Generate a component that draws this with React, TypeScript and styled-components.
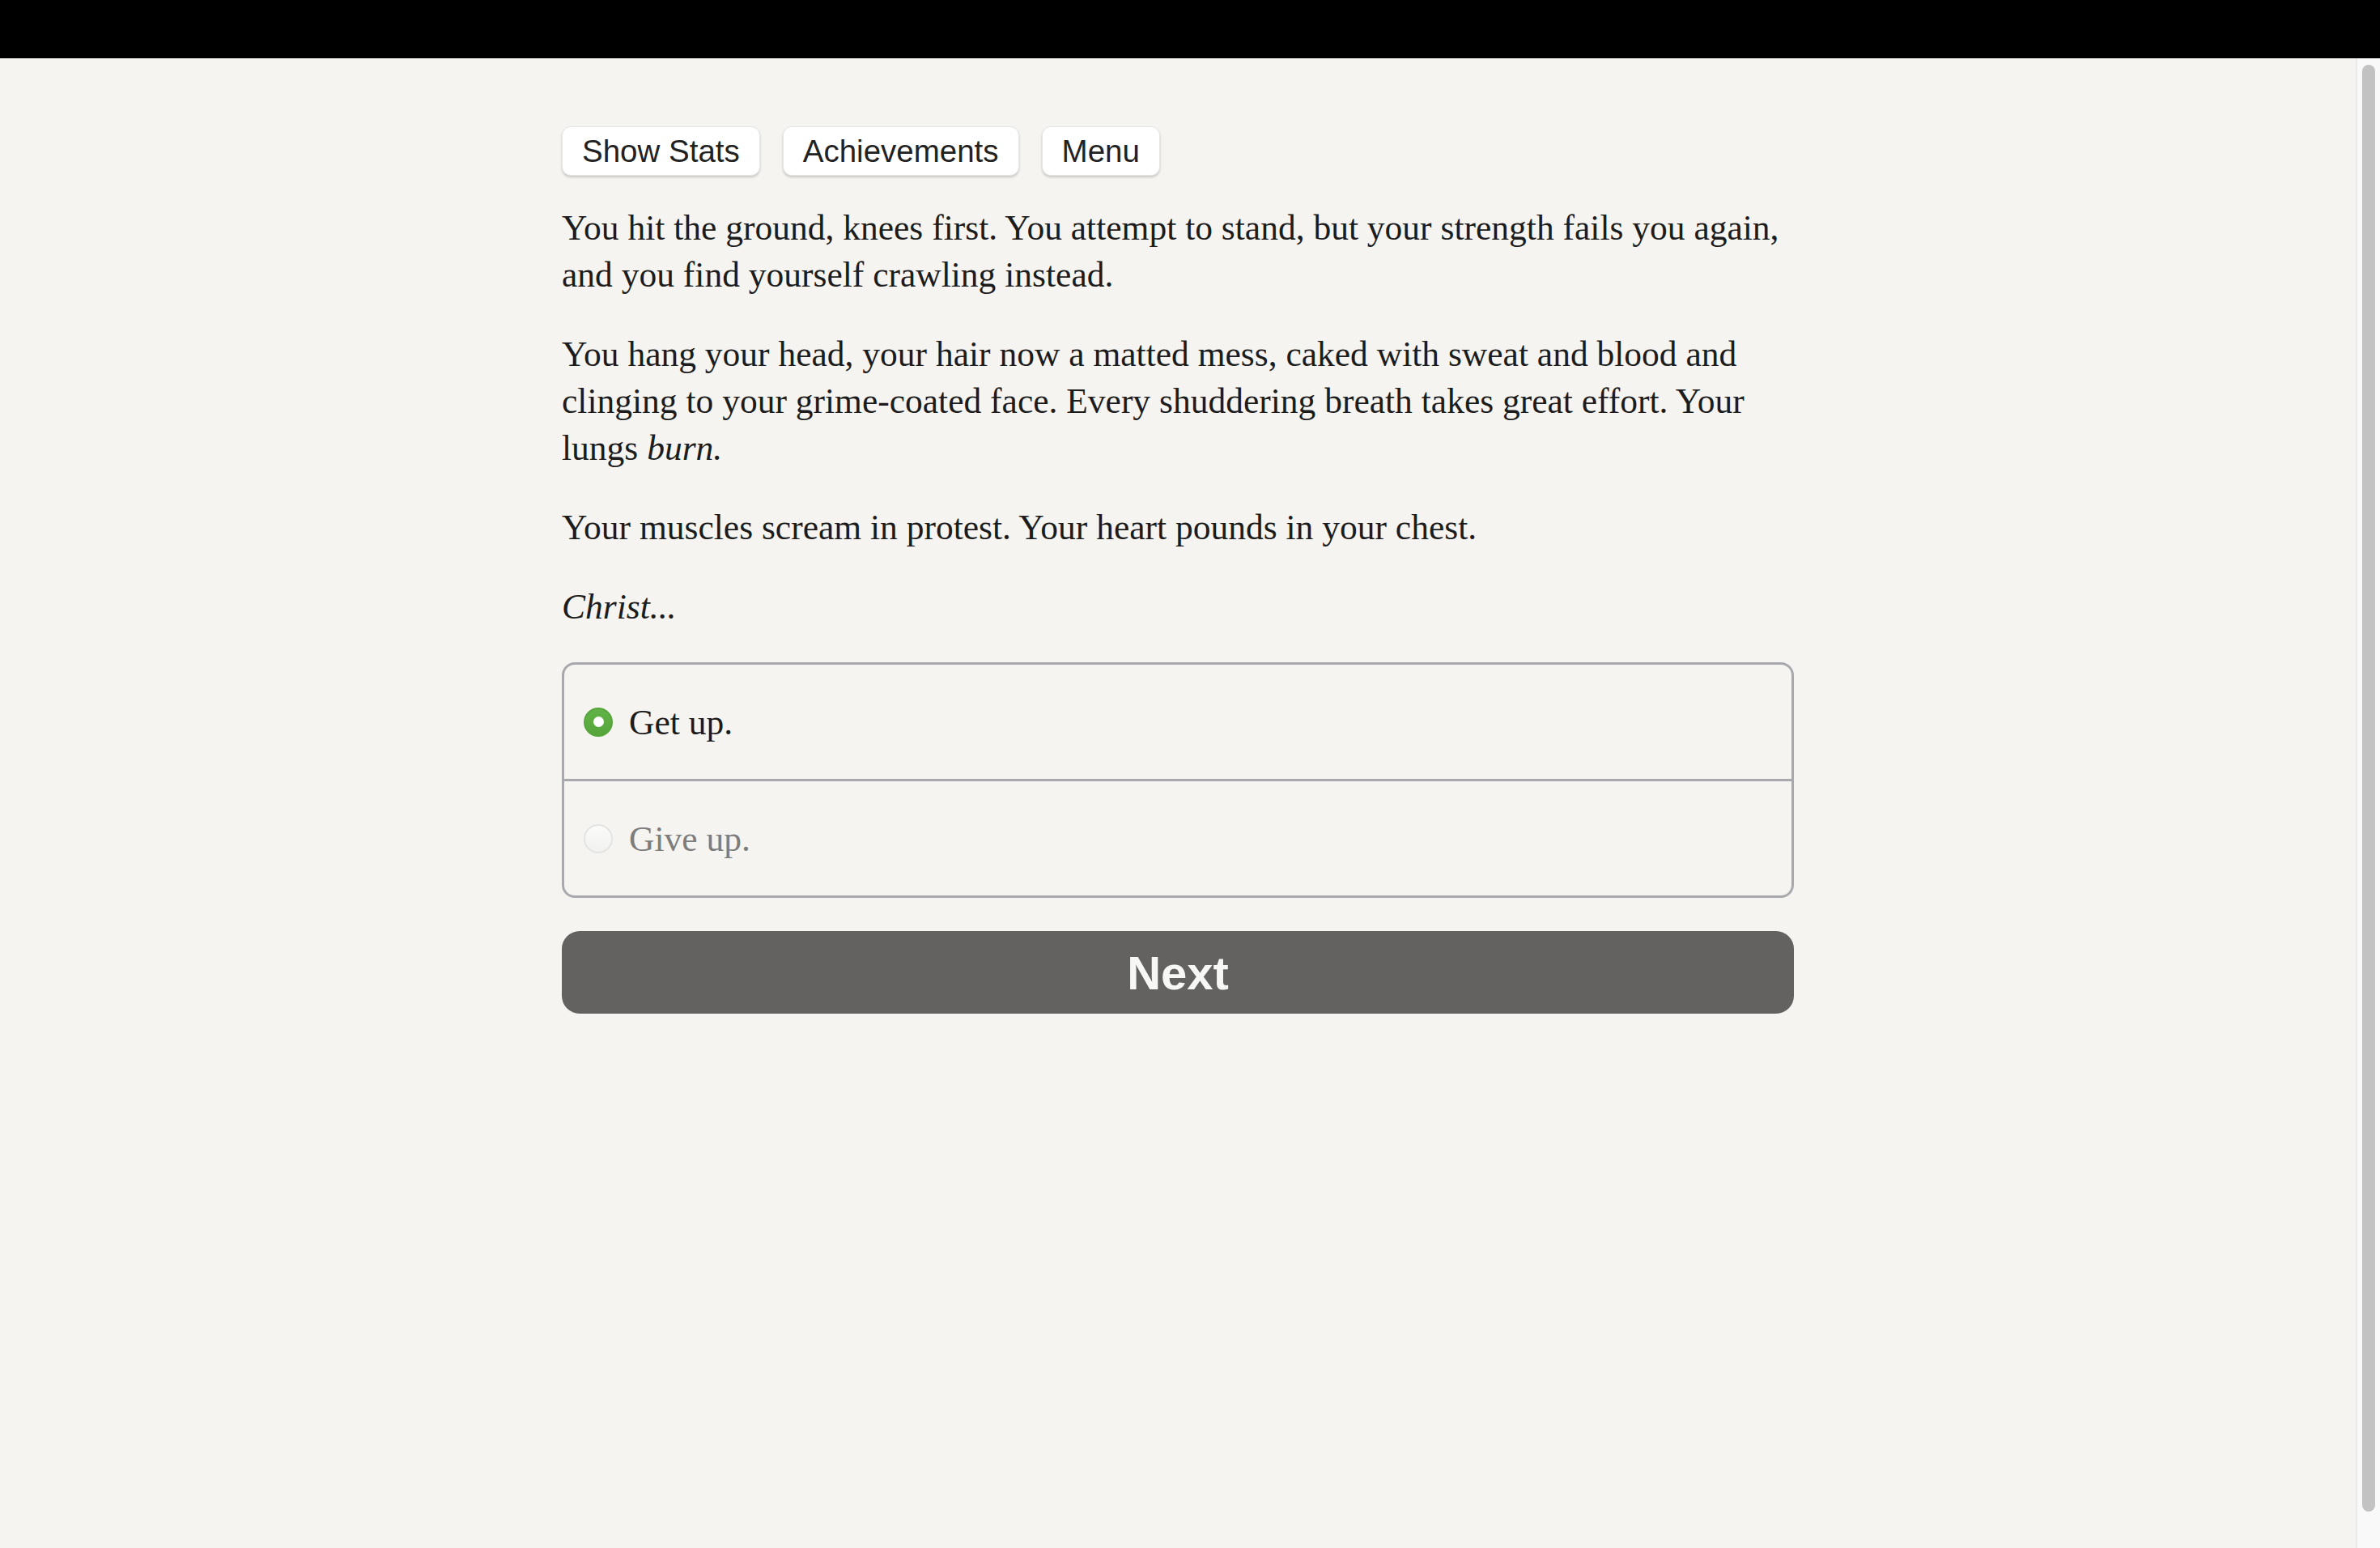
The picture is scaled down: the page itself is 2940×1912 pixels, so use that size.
import React, { useState } from 'react';
import styled, { createGlobalStyle } from 'styled-components';

const GlobalStyle = createGlobalStyle`
  html, body {
    margin: 0;
    padding: 0;
    height: 100%;
    overflow: hidden;
  }
  #root {
    height: 100%;
  }
`;

// Styled components
const Shell = styled.div`
  height: 100vh;
  display: flex;
  flex-direction: column;
  background-color: #000;
`;

const TopBar = styled.div`
  height: 72px;
  flex-shrink: 0;
  background-color: #000;
`;

const Body = styled.div`
  flex: 1;
  display: flex;
  min-height: 0;
  background-color: #f5f4f0;
`;

const Content = styled.div`
  flex: 1;
  overflow: hidden;
`;

// the window's scrollbar, drawn as a plain column beside the page
const ScrollTrack = styled.div`
  width: 30px;
  flex-shrink: 0;
  box-sizing: border-box;
  display: flex;
  padding: 8px 6px 45px 6px;
  background-color: #f9f9f9;
  border-left: 2px solid #e9e9e9;
`;

const ScrollThumb = styled.div`
  flex: 1;
  border-radius: 8px;
  background-color: #c2c2c2;
`;

const Page = styled.div`
  width: 1522px;
  box-sizing: border-box;
  margin: 0 auto;
  padding-top: 84px;
  font-family: 'Liberation Serif', 'Times New Roman', serif;
  font-size: 43.5px;
  line-height: 58px;
  color: #1c1c1c;
`;

const ButtonRow = styled.div`
  display: flex;
  gap: 28px;
  margin-bottom: 35px;
`;

const MenuButton = styled.button`
  height: 61px;
  padding: 0 24px;
  border: 1px solid #e6e6e4;
  border-radius: 11px;
  background-color: #fff;
  box-shadow: 0 2px 3px rgba(0, 0, 0, 0.18);
  font-family: 'Liberation Sans', Arial, sans-serif;
  font-size: 38.5px;
  color: #222;
  cursor: pointer;
`;

const Paragraph = styled.p`
  margin: 0 0 40px;
`;

const ChoiceList = styled.div`
  border: 3px solid #a9a9ad;
  border-radius: 16px;
  margin-bottom: 41px;
  overflow: hidden;
`;

const ChoiceRow = styled.label<{ $selected: boolean }>`
  display: flex;
  align-items: center;
  gap: 20px;
  height: 141px;
  padding-left: 24px;
  color: ${(p) => (p.$selected ? '#1c1c1c' : '#7d7d7d')};
  cursor: pointer;

  & + & {
    border-top: 3px solid #a9a9ad;
  }
`;

const Radio = styled.span<{ $selected: boolean }>`
  width: 36px;
  height: 36px;
  flex-shrink: 0;
  box-sizing: border-box;
  border-radius: 50%;
  display: flex;
  align-items: center;
  justify-content: center;
  background: ${(p) =>
    p.$selected ? 'linear-gradient(#62b347, #55a53b)' : 'linear-gradient(#fbfbfa, #f1f1f0)'};
  border: 2px solid ${(p) => (p.$selected ? '#57a63d' : '#e4e4e2')};

  &::after {
    content: '';
    display: ${(p) => (p.$selected ? 'block' : 'none')};
    width: 13px;
    height: 13px;
    border-radius: 50%;
    background-color: #fff;
  }
`;

const NextButton = styled.button`
  display: block;
  width: 100%;
  height: 102px;
  border: none;
  border-radius: 22px;
  background-color: #636260;
  color: #f7f7f5;
  font-family: 'Liberation Sans', Arial, sans-serif;
  font-weight: bold;
  font-size: 58px;
  cursor: pointer;
`;

const choices = ['Get up.', 'Give up.'];

const App = () => {
  const [selected, setSelected] = useState<number>(0);

  return (
    <>
      <GlobalStyle />
      <Shell>
        <TopBar />
        <Body>
          <Content>
            <Page>
              <ButtonRow>
                <MenuButton>Show Stats</MenuButton>
                <MenuButton>Achievements</MenuButton>
                <MenuButton>Menu</MenuButton>
              </ButtonRow>

              <Paragraph>
                You hit the ground, knees first. You attempt to stand, but your strength fails you
                again, and you find yourself crawling instead.
              </Paragraph>
              <Paragraph>
                You hang your head, your hair now a matted mess, caked with sweat and blood and
                clinging to your grime-coated face. Every shuddering breath takes great effort. Your
                lungs <i>burn.</i>
              </Paragraph>
              <Paragraph>Your muscles scream in protest. Your heart pounds in your chest.</Paragraph>
              <Paragraph>
                <i>Christ...</i>
              </Paragraph>

              <ChoiceList>
                {choices.map((c, i) => (
                  <ChoiceRow key={c} $selected={selected === i} onClick={() => setSelected(i)}>
                    <Radio $selected={selected === i} />
                    {c}
                  </ChoiceRow>
                ))}
              </ChoiceList>

              <NextButton>Next</NextButton>
            </Page>
          </Content>
          <ScrollTrack>
            <ScrollThumb />
          </ScrollTrack>
        </Body>
      </Shell>
    </>
  );
};

export default App;
